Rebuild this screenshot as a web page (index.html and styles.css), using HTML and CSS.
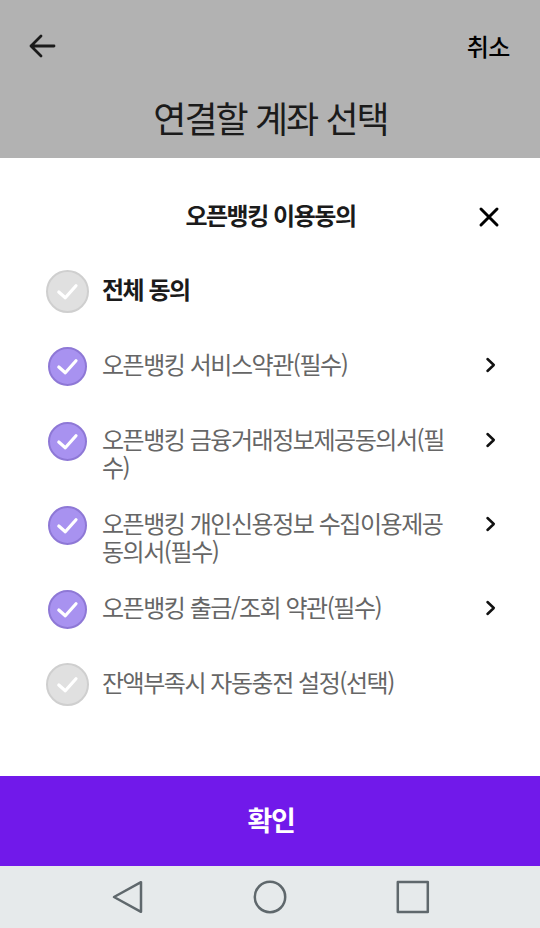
FILE: index.html
```html
<!DOCTYPE html>
<html lang="ko">
<head>
  <meta charset="UTF-8" />
  <meta name="viewport" content="width=device-width, initial-scale=1.0"/>
  <title>오픈뱅킹 이용동의</title>
  <link rel="stylesheet" href="styles.css">
</head>
<body>
  <svg class="symbols" aria-hidden="true">
    <symbol id="check" viewBox="0 0 44 44">
      <path d="M12.8 22l6.5 5.8L30 15.8"/>
    </symbol>
    <symbol id="chevron" viewBox="0 0 12 18">
      <path d="M2.5 3L8.8 9L2.5 15"/>
    </symbol>
  </svg>

  <div class="screen">
    <header class="page-header">
      <div class="top-bar">
        <svg class="back" viewBox="0 0 28 24"><path d="M13 2L3 12l10 10M3 12h23"/></svg>
        <span class="cancel">취소</span>
      </div>
      <h1>연결할 계좌 선택</h1>
    </header>

    <main class="sheet">
      <div class="sheet-header">
        <h2>오픈뱅킹 이용동의</h2>
        <svg class="close" viewBox="0 0 22 22"><path d="M3 3l16 16M19 3L3 19"/></svg>
      </div>

      <ul class="terms">
        <li class="term all">
          <span class="circle"><svg><use href="#check"/></svg></span>
          <span class="label">전체 동의</span>
        </li>
        <li class="term">
          <span class="circle on"><svg><use href="#check"/></svg></span>
          <span class="label">오픈뱅킹 서비스약관(필수)</span>
          <svg class="chevron"><use href="#chevron"/></svg>
        </li>
        <li class="term">
          <span class="circle on"><svg><use href="#check"/></svg></span>
          <span class="label">오픈뱅킹 금융거래정보제공동의서(필수)</span>
          <svg class="chevron"><use href="#chevron"/></svg>
        </li>
        <li class="term">
          <span class="circle on"><svg><use href="#check"/></svg></span>
          <span class="label">오픈뱅킹 개인신용정보 수집이용제공동의서(필수)</span>
          <svg class="chevron"><use href="#chevron"/></svg>
        </li>
        <li class="term">
          <span class="circle on"><svg><use href="#check"/></svg></span>
          <span class="label">오픈뱅킹 출금/조회 약관(필수)</span>
          <svg class="chevron"><use href="#chevron"/></svg>
        </li>
        <li class="term">
          <span class="circle"><svg><use href="#check"/></svg></span>
          <span class="label">잔액부족시 자동충전 설정(선택)</span>
        </li>
      </ul>
    </main>

    <button class="confirm">확인</button>

    <nav class="nav-bar">
      <svg viewBox="0 0 36 36"><path d="M32 3.2v29.6L5 18z"/></svg>
      <svg viewBox="0 0 36 36"><circle cx="18" cy="18" r="15.2"/></svg>
      <svg viewBox="0 0 36 36"><path d="M2.8 3h30v30h-30z"/></svg>
    </nav>
  </div>
</body>
</html>
```
FILE: styles.css
```css
* {
  box-sizing: border-box;
}

body {
  margin: 0;
  font-family: 'Noto Sans CJK KR', sans-serif;
  font-size: 24px;
  letter-spacing: -1.46px;
  color: #1b1b1b;
}

svg {
  display: block;
  fill: none;
  stroke: currentColor;
  stroke-linecap: round;
  stroke-linejoin: round;
}

.symbols {
  display: none;
}

.screen {
  display: flex;
  flex-direction: column;
  height: 928px;
}

/* dimmed page behind the sheet */
.page-header {
  height: 158px;
  background: #b2b2b2;
}

.top-bar {
  display: flex;
  align-items: center;
  justify-content: space-between;
  height: 91px;
  padding: 0 30px 0 28px;
}

.back {
  width: 28px;
  height: 24px;
  stroke-width: 2.8;
}

.cancel {
  font-weight: 500;
  letter-spacing: -0.4px;
  color: #000;
}

h1 {
  margin: 0;
  padding-left: 1px;
  font-size: 36px;
  font-weight: 400;
  line-height: 52px;
  letter-spacing: -1.95px;
  text-align: center;
}

.sheet {
  flex: 1;
  padding-top: 38px;
  background: #fff;
}

.sheet-header {
  display: grid;
  grid-template-columns: 62px 1fr 62px;
  align-items: center;
  height: 40px;
}

h2 {
  grid-column: 2;
  margin: 0;
  font-size: 24px;
  font-weight: 700;
  line-height: 38px;
  padding: 0 0 2px 1px;
  text-align: center;
}

.close {
  width: 22px;
  height: 22px;
  margin-top: 1px;
  color: #000;
  stroke-width: 3;
}

.terms {
  margin: 0;
  padding: 32px 43px 0 46px;
  list-style: none;
}

.term {
  display: flex;
  align-items: flex-start;
  min-height: 75px;
  color: #666;
}

.circle {
  display: flex;
  align-items: center;
  justify-content: center;
  width: 43px;
  height: 43px;
  margin-top: 2px;
  border: 2px solid #cfcfcf;
  border-radius: 50%;
  background: #e0e0e0;
  color: #fff;
}

.circle.on {
  width: 39px;
  height: 39px;
  margin: 4px 2px;
  border-color: #8e78d6;
  background: #a892f0;
}

.circle svg {
  flex: none;
  width: 44px;
  height: 44px;
  stroke-width: 3.2;
}

.label {
  width: 348px;
  margin-left: 13px;
  padding: 7px 0 21px;
  line-height: 28px;
  word-break: break-all;
}

.all .label {
  font-weight: 700;
  color: #1b1b1b;
}

.chevron {
  width: 12px;
  height: 18px;
  margin: 13px 0 0 auto;
  color: #111;
  stroke-width: 2.5;
}

.confirm {
  height: 90px;
  padding: 0 0 4px 2px;
  border: 0;
  background: #7119ea;
  color: #fff;
  font-family: inherit;
  font-size: 27px;
  font-weight: 700;
  letter-spacing: -1.4px;
}

.nav-bar {
  display: flex;
  align-items: center;
  justify-content: space-between;
  height: 62px;
  padding: 0 109px;
  background: #e6eaeb;
  color: #5f686c;
}

.nav-bar svg {
  width: 36px;
  height: 36px;
  stroke-width: 2.5;
}
```
